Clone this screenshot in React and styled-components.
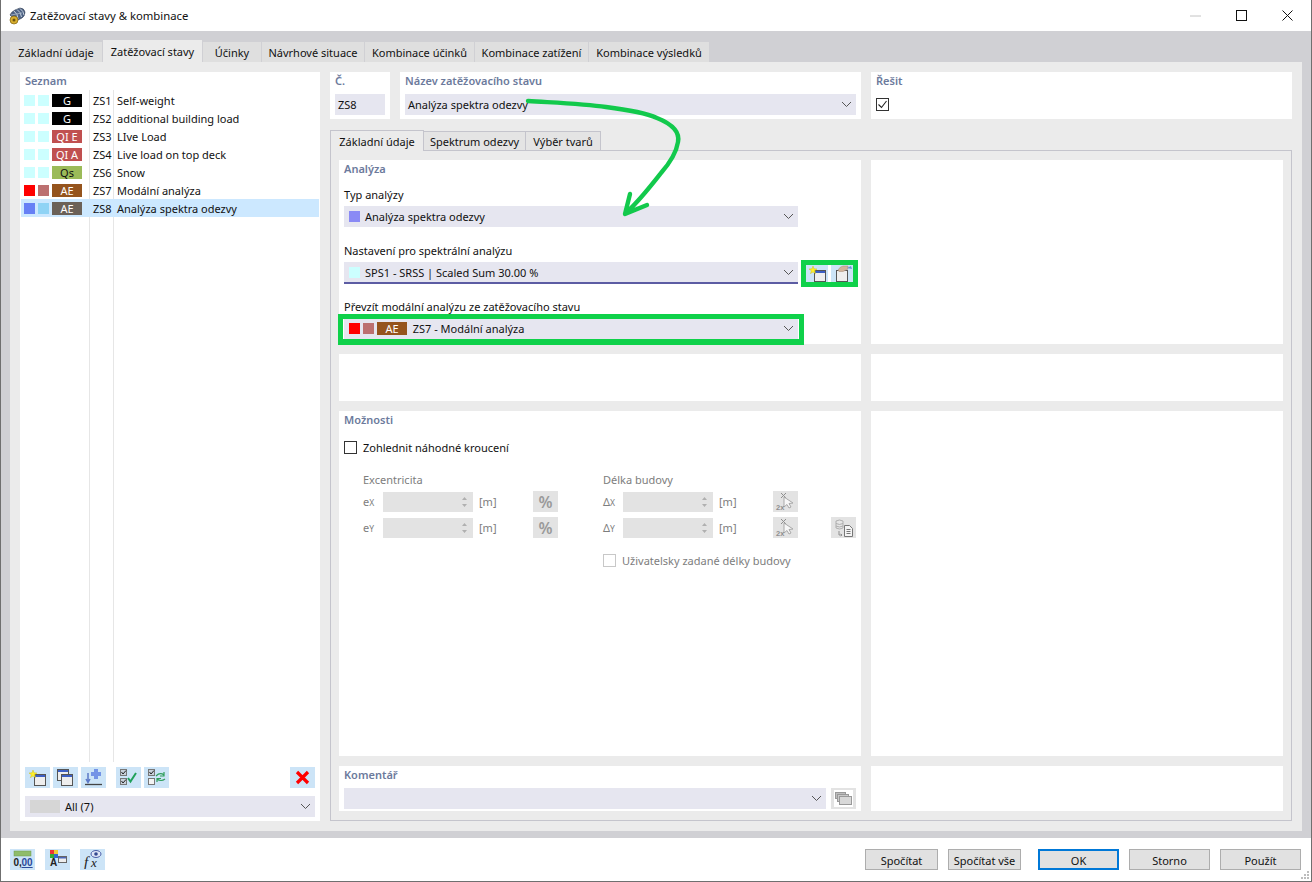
import React from 'react';
import styled, { createGlobalStyle } from 'styled-components';

const GlobalStyle = createGlobalStyle`
  html, body {
    margin: 0;
    padding: 0;
    background: #fff;
    overflow: hidden;
  }
  * {
    box-sizing: border-box;
  }
`;

const BAND = '#d0d0d4';
const PANEL = '#ebebeb';
const FIELD = '#e6e6f0';
const TITLE = '#6c7a9c';
const GREEN = '#0fd14a';

const Window = styled.div`
  position: relative;
  width: 1312px;
  height: 882px;
  display: flex;
  flex-direction: column;
  background: #fff;
  border-left: 1px solid #6f6f6f;
  border-right: 1px solid #6f6f6f;
  border-bottom: 1px solid #6f6f6f;
  font-family: 'Noto Sans', 'Open Sans', sans-serif;
  font-size: 11px;
  color: #111;
`;

const TitleBar = styled.div`
  height: 31px;
  flex: none;
  display: flex;
  align-items: center;
  padding: 0 1px 0 7px;
  gap: 4px;
  font-size: 11.3px;
`;

const WindowButtons = styled.div`
  margin-left: auto;
  display: flex;
  align-items: center;
  height: 100%;
`;

const WindowButton = styled.div`
  width: 46px;
  height: 100%;
  display: flex;
  align-items: center;
  justify-content: center;
`;

const TabStrip = styled.div`
  height: 31px;
  flex: none;
  display: flex;
  align-items: flex-end;
  gap: 1px;
  padding-left: 9px;
  background: ${BAND};
`;

const TopTab = styled.div`
  width: ${(p) => p.$w}px;
  height: ${(p) => (p.$active ? 22 : 20)}px;
  display: flex;
  align-items: center;
  justify-content: center;
  background: ${(p) => (p.$active ? PANEL : '#dfdfdf')};
`;

const Main = styled.div`
  flex: 1;
  min-height: 0;
  display: flex;
  background: ${BAND};
  padding: 0 9px 7px;
`;

const Body = styled.div`
  flex: 1;
  display: flex;
  gap: 10px;
  padding: 10px;
  background: ${PANEL};
`;

const ListPanel = styled.div`
  width: 300px;
  flex: none;
  display: flex;
  flex-direction: column;
  background: #fff;
  padding: 0 1px;
`;

const SectionTitle = styled.div`
  height: 18px;
  flex: none;
  display: flex;
  align-items: center;
  padding-left: ${(p) => p.$pad ?? 4}px;
  padding-bottom: 2px;
  font-weight: 600;
  color: ${TITLE};
`;

const ListArea = styled.div`
  flex: 1;
  display: flex;
  flex-direction: column;
  padding-top: 1px;
  background-image: linear-gradient(#e6e6e6, #e6e6e6), linear-gradient(#e6e6e6, #e6e6e6);
  background-size: 1px 672px, 1px 672px;
  background-position: 68px 0, 92px 0;
  background-repeat: no-repeat;
`;

const Row = styled.div`
  height: 18px;
  display: flex;
  align-items: center;
  padding-left: 3px;
  background: ${(p) => (p.$selected ? '#cce8ff' : 'transparent')};
`;

const Swatch = styled.span`
  width: ${(p) => p.$w || 11}px;
  height: ${(p) => p.$h || 11}px;
  flex: none;
  margin-right: ${(p) => p.$gap ?? 3}px;
  background: ${(p) => p.$c};
`;

const Tag = styled.span`
  width: 30px;
  height: 13px;
  flex: none;
  display: flex;
  align-items: center;
  justify-content: center;
  background: ${(p) => p.$c};
  color: ${(p) => p.$fg || '#fff'};
`;

const RowCode = styled.span`
  width: 24px;
  flex: none;
  margin-left: 11px;
`;

const ListTools = styled.div`
  display: flex;
  align-items: center;
  padding: 0 4px;
  height: 21px;
`;

const IconButton = styled.div`
  width: ${(p) => p.$w || 25}px;
  height: ${(p) => p.$h || 21}px;
  flex: none;
  margin-right: ${(p) => p.$mr ?? 3}px;
  margin-left: ${(p) => p.$ml || 0}px;
  display: flex;
  align-items: center;
  justify-content: center;
  overflow: hidden;
  background: ${(p) => (p.$off ? '#e3e3e3' : '#cce4f7')};
`;

const Combo = styled.div`
  height: ${(p) => p.$h || 21}px;
  width: ${(p) => (p.$w ? `${p.$w}px` : 'auto')};
  display: flex;
  align-items: center;
  flex: none;
  padding: 0 0 0 ${(p) => p.$pl ?? 5}px;
  background: ${FIELD};
  border-bottom: ${(p) => (p.$line ? '2px solid #5c5ca3' : 'none')};
`;

const Chevron = styled.svg`
  margin-left: auto;
  margin-right: 4px;
  flex: none;
`;

const Arrow = () => (
  <Chevron width="11" height="7" viewBox="0 0 11 7">
    <polyline points="1,1 5.5,5.5 10,1" fill="none" stroke="#555" strokeWidth="1" />
  </Chevron>
);

const FilterWrap = styled.div`
  margin: 8px 4px 4px;
`;

const RightColumn = styled.div`
  flex: 1;
  min-width: 0;
  display: flex;
  flex-direction: column;
`;

const HeadRow = styled.div`
  display: flex;
  gap: 10px;
  height: 47px;
  flex: none;
`;

const HeadCard = styled.div`
  width: ${(p) => (p.$w ? `${p.$w}px` : 'auto')};
  flex: ${(p) => (p.$w ? 'none' : 1)};
  background: #fff;
  padding: 0 5px;
  display: flex;
  flex-direction: column;
`;

const HeadValue = styled.div`
  margin-top: ${(p) => p.$mt || 4}px;
`;

const InnerTabs = styled.div`
  height: 21px;
  margin-top: 11px;
  flex: none;
  display: flex;
  align-items: flex-end;
  border-bottom: 1px solid #c4c4cc;
`;

const InnerTab = styled.div`
  width: ${(p) => p.$w}px;
  height: ${(p) => (p.$active ? 21 : 19)}px;
  margin-bottom: ${(p) => (p.$active ? -1 : 0)}px;
  display: flex;
  align-items: center;
  justify-content: center;
  background: ${(p) => (p.$active ? PANEL : '#e4e4e4')};
  border: 1px solid #c4c4cc;
  border-bottom: none;
  border-left: ${(p) => (p.$active ? '1px solid #c4c4cc' : 'none')};
`;

const TabPanel = styled.div`
  flex: 1;
  min-height: 0;
  display: grid;
  grid-template-columns: 522px 412px;
  grid-template-rows: 184px 47px 345px 45px;
  gap: 10px;
  padding: 9px 8px;
  border: 1px solid #c4c4cc;
  border-top: none;
`;

const Card = styled.div`
  background: #fff;
  padding: 0 5px;
  display: flex;
  flex-direction: column;
`;

const FieldLabel = styled.div`
  height: 16px;
  margin-top: ${(p) => p.$mt || 0}px;
  margin-bottom: 3px;
  padding-bottom: 2px;
  display: flex;
  align-items: center;
`;

const Framed = styled.div`
  position: relative;
  width: ${(p) => p.$w}px;
  &::after {
    content: '';
    position: absolute;
    inset: -4px -6px -6px -6px;
    border: 5px solid ${GREEN};
    border-bottom-width: 6px;
    pointer-events: none;
  }
`;

const FieldRow = styled.div`
  display: flex;
  align-items: flex-start;
`;

const FrameTools = styled.div`
  display: flex;
  gap: 3px;
  width: 57px;
  height: 27px;
  margin: -2px 0 -3px 3px;
  border: 5px solid ${GREEN};
  background: #fff;
`;

const CheckLine = styled.label`
  display: flex;
  align-items: center;
  gap: 6px;
  margin-top: ${(p) => p.$mt}px;
  color: ${(p) => (p.$off ? '#7d7d7d' : 'inherit')};
`;

const Box = styled.span`
  width: 13px;
  height: 13px;
  flex: none;
  display: flex;
  align-items: center;
  justify-content: center;
  border: 1px solid ${(p) => (p.$off ? '#c8c8c8' : '#333')};
  background: #fff;
`;

const OptionsGrid = styled.div`
  display: grid;
  grid-template-columns: 240px 1fr;
  margin-top: 17px;
  padding-left: 19px;
  color: #7d7d7d;
`;

const OptionGroup = styled.div`
  display: flex;
  flex-direction: column;
  gap: 5px;
`;

const GroupLabel = styled.div`
  height: 16px;
  margin-bottom: -2px;
`;

const Measure = styled.div`
  display: flex;
  align-items: center;
  height: 21px;
`;

const SymbolLabel = styled.span`
  width: 20px;
  flex: none;
`;

const Sub = styled.span`
  font-size: 8.5px;
`;

const Spin = styled.div`
  width: 90px;
  height: 20px;
  flex: none;
  display: flex;
  align-items: center;
  justify-content: flex-end;
  padding-right: 5px;
  background: #e3e3e3;
`;

const Unit = styled.span`
  width: 60px;
  flex: none;
  padding-left: 6px;
`;

const Percent = styled.span`
  font-size: 16px;
  font-weight: 600;
  color: #9a9a9a;
`;

const CommentRow = styled.div`
  display: flex;
  align-items: center;
  gap: 5px;
  margin-top: 4px;
`;

const Footer = styled.div`
  height: 43px;
  flex: none;
  display: flex;
  align-items: center;
  padding: 0 10px 1px 9px;
`;

const FooterIcons = styled.div`
  display: flex;
  gap: 10px;
`;

const FooterButtons = styled.div`
  margin-left: auto;
  display: flex;
  align-items: center;
`;

const DialogButton = styled.div`
  width: ${(p) => p.$w}px;
  height: 21px;
  margin-left: ${(p) => p.$ml ?? 10}px;
  padding-top: 2px;
  display: flex;
  align-items: center;
  justify-content: center;
  background: #e1e1e1;
  border: ${(p) => (p.$primary ? '2px solid #0078d7' : '1px solid #adadad')};
`;

const Overlay = styled.svg`
  position: absolute;
  left: -1px;
  top: 0;
  pointer-events: none;
`;

const Grip = styled.svg`
  position: absolute;
  right: 1px;
  bottom: 1px;
`;

const AppGlyph = () => (
  <svg width="18" height="18" viewBox="0 0 18 18">
    <path d="M2 8 Q3 5 7 3 L12 1 Q16 1 17 5 Q17 9 14 11 L8 14 Z" fill="#4f6486" stroke="#2f3a4f" strokeWidth="0.6" />
    <path d="M6 4 Q10 7 10 12 M9 2.500 Q13 5 13.500 10 M12 1.500 Q15.500 4 16 8" fill="none" stroke="#c5d0dd" strokeWidth="1" />
    <path d="M3 8 L14 6" stroke="#aab7c8" strokeWidth="0.8" />
    <circle cx="6" cy="13" r="4" fill="#d7ae2e" stroke="#7f6210" strokeWidth="0.7" />
    <circle cx="6" cy="13" r="1.500" fill="#6d5410" />
  </svg>
);

const Star = ({ x = 2, y = 1 }) => (
  <path
    transform={`translate(${x} ${y})`}
    d="M4 0 L5 2.800 L8 3 L5.600 4.800 L6.600 7.600 L4 6 L1.400 7.600 L2.400 4.800 L0 3 L3 2.800 Z"
    fill="#fff02a"
    stroke="#c8b400"
    strokeWidth="0.4"
  />
);

const Pane = ({ x, y, w = 11, h = 11, tone = '#3d5fc4', line = '#555' }) => (
  <g>
    <rect x={x + 0.5} y={y + 0.5} width={w} height={h} fill="#eeeeee" stroke={line} />
    <rect x={x + 1} y={y + 1} width={w - 1} height={2} fill={tone} />
  </g>
);

const NewIcon = () => (
  <svg width="21" height="17" viewBox="0 0 21 17">
    <Pane x={7} y={5} />
    <Star x={2} y={1} />
  </svg>
);

const TakeIcon = () => (
  <svg width="21" height="17" viewBox="0 0 21 17">
    <Pane x={4} y={5} tone="#eeeeee" />
    <path d="M6 5 Q8 1.500 11 1 L16 1 L16 4 L11 6.500 L7 6.500 Z" fill="#d2b49c" stroke="#a58a74" strokeWidth="0.5" />
    <path d="M15 3 L19 1 L20 4 Z" fill="#6c8fd6" />
  </svg>
);

const CopyIcon = () => (
  <svg width="21" height="17" viewBox="0 0 21 17">
    <Pane x={2} y={0} />
    <Pane x={6} y={5} />
  </svg>
);

const ImportIcon = () => (
  <svg width="21" height="17" viewBox="0 0 21 17">
    <path d="M11 0 H15 V3 H18 V7 H15 V10 H11 V7 H8 V3 H11 Z" fill="#7393e6" />
    <path d="M5 4 V13 M3 10 L5 13.500 L7 10" fill="none" stroke="#5b78c8" strokeWidth="1.5" />
    <path d="M2 15.500 H19" stroke="#444" strokeWidth="1.300" />
  </svg>
);

const MiniCheck = ({ y, on = true }) => (
  <g>
    <rect x="2.500" y={y + 0.5} width="6" height="6" fill={on ? '#c8d0da' : '#f4f4f4'} stroke="#777" />
    {on && <path d={`M3.500 ${y + 3} L5 ${y + 5} L8 ${y + 1.5}`} fill="none" stroke="#222" />}
  </g>
);

const CheckAllIcon = () => (
  <svg width="21" height="17" viewBox="0 0 21 17">
    <MiniCheck y={0} />
    <MiniCheck y={9} />
    <path d="M10 9 L12.500 12.500 L18 4" fill="none" stroke="#1fa05a" strokeWidth="2" />
  </svg>
);

const SwapIcon = () => (
  <svg width="21" height="17" viewBox="0 0 21 17">
    <MiniCheck y={0} />
    <MiniCheck y={9} on={false} />
    <path d="M10 7 Q14 3 18 6 M18 3 V7 H14" fill="none" stroke="#2e9e5b" strokeWidth="1.200" />
    <path d="M19 10 Q15 13 11 10 M11 13 V9.500 H15" fill="none" stroke="#2e9e5b" strokeWidth="1.200" />
  </svg>
);

const DeleteIcon = () => (
  <svg width="15" height="15" viewBox="0 0 15 15">
    <path d="M2 2 L13 13 M13 2 L2 13" stroke="#f00" strokeWidth="3.200" />
  </svg>
);

const UnitsIcon = () => (
  <svg width="21" height="18" viewBox="0 0 21 18">
    <rect x="2" y="1" width="17" height="5" fill="#8fbc6a" stroke="#6f9a4c" strokeWidth="0.5" />
    <text x="1.500" y="16" fontFamily="Liberation Sans" fontSize="10" fontWeight="700" fill="#222">0,</text>
    <text x="9.500" y="16" fontFamily="Liberation Sans" fontSize="10" fontWeight="700" fill="#2a4a9c" textDecoration="underline">00</text>
  </svg>
);

const StyleIcon = () => (
  <svg width="21" height="18" viewBox="0 0 21 18">
    <rect x="3" y="0" width="4" height="4" fill="#e33" />
    <rect x="7" y="0" width="4" height="4" fill="#ec3" />
    <rect x="3" y="4" width="4" height="4" fill="#3a3" />
    <rect x="7" y="4" width="4" height="4" fill="#36c" />
    <text x="3" y="16" fontFamily="Liberation Sans" fontSize="10" fontWeight="700" fill="#222">A</text>
    <rect x="11.500" y="6.500" width="8" height="6" fill="#eee" stroke="#666" />
    <rect x="12" y="7" width="7" height="1.500" fill="#4a66b8" />
  </svg>
);

const FormulaIcon = () => (
  <svg width="21" height="20" viewBox="0 0 21 20">
    <text x="2" y="18" fontFamily="Liberation Serif" fontSize="15" fontStyle="italic" fill="#222">f</text>
    <text x="9" y="18" fontFamily="Liberation Serif" fontSize="13" fontStyle="italic" fill="#222">x</text>
    <ellipse cx="14" cy="5" rx="5" ry="3.500" fill="#dfe6f7" stroke="#4a5ea8" />
    <circle cx="14" cy="5" r="1.800" fill="#34488f" />
  </svg>
);

const PickIcon = () => (
  <svg width="21" height="20" viewBox="0 0 21 20">
    <path d="M6 1 L11 6 M11 1 L6 6" stroke="#8f8f8f" />
    <path d="M9 5 L9 15 L12 12.500 L14 16 L16 15 L14 11.500 L18 11 Z" fill="#f7f7f7" stroke="#a9a9a9" />
    <text x="1" y="18" fontFamily="Liberation Sans" fontSize="7.500" fontWeight="700" fill="#8f8f8f">2x</text>
  </svg>
);

const StackIcon = () => (
  <svg width="21" height="20" viewBox="0 0 21 20">
    <path d="M3 3 Q6.500 1 10 3 V10 Q6.500 12 3 10 Z M3 5.500 Q6.500 7.500 10 5.500 M3 8 Q6.500 10 10 8" fill="#e6e6e6" stroke="#a8a8a8" strokeWidth="0.9" />
    <path d="M6 13 V17 H9 M7.800 15.800 L9 17 L7.800 18.200" fill="none" stroke="#8f8f8f" />
    <path d="M11.500 7.500 H16.500 L19.500 10.500 V18.500 H11.500 Z M13.500 11.500 H17.500 M13.500 13.500 H17.500 M13.500 15.500 H17.500" fill="#f4f4f4" stroke="#777" />
  </svg>
);

const WindowsIcon = () => (
  <svg width="19" height="17" viewBox="0 0 19 17">
    <rect width="19" height="17" fill="#fff" />
    <rect x="1.500" y="2.500" width="10" height="6" fill="#bdbdbd" stroke="#999" />
    <rect x="3.500" y="4.500" width="11" height="7" fill="#c9c9c9" stroke="#999" />
    <rect x="5.500" y="6.500" width="12" height="8" fill="#d8d8d8" stroke="#999" />
  </svg>
);

const Spinner = () => (
  <svg width="7" height="14" viewBox="0 0 7 14">
    <path d="M1 5 L3.500 2 L6 5 Z M1 9 L3.500 12 L6 9 Z" fill="#b0b0b0" />
  </svg>
);

const Tick = () => (
  <svg width="11" height="11" viewBox="0 0 11 11">
    <polyline points="1.500,5.500 4.500,8.500 9.500,2" fill="none" stroke="#222" strokeWidth="1.100" />
  </svg>
);

const CYAN = '#ccffff';

const rows = [
  { code: 'ZS1', name: 'Self-weight', a: CYAN, b: CYAN, tag: 'G', c: '#000' },
  { code: 'ZS2', name: 'additional building load', a: CYAN, b: CYAN, tag: 'G', c: '#000' },
  { code: 'ZS3', name: 'LIve Load', a: CYAN, b: CYAN, tag: 'QI E', c: '#c05050' },
  { code: 'ZS4', name: 'Live load on top deck', a: CYAN, b: CYAN, tag: 'QI A', c: '#c05050' },
  { code: 'ZS6', name: 'Snow', a: CYAN, b: CYAN, tag: 'Qs', c: '#9bbb59', fg: '#111' },
  { code: 'ZS7', name: 'Modální analýza', a: '#ff0000', b: '#bc7070', tag: 'AE', c: '#95541d' },
  { code: 'ZS8', name: 'Analýza spektra odezvy', a: '#6680f5', b: '#8fd3f5', tag: 'AE', c: '#6b6158', selected: true },
];

const topTabs = [
  ['Základní údaje', 92],
  ['Zatěžovací stavy', 99, true],
  ['Účinky', 58],
  ['Návrhové situace', 102],
  ['Kombinace účinků', 109],
  ['Kombinace zatížení', 113],
  ['Kombinace výsledků', 120],
];

const measureRows = (labels, last) =>
  labels.map(([symbol, sub, icon], i) => (
    <Measure key={sub}>
      <SymbolLabel>
        {symbol}
        <Sub>{sub}</Sub>
      </SymbolLabel>
      <Spin>
        <Spinner />
      </Spin>
      <Unit>[m]</Unit>
      <IconButton $off $mr={last && i === 1 ? 33 : 3}>
        {icon}
      </IconButton>
      {last && i === 1 && (
        <IconButton $off $mr={0}>
          <StackIcon />
        </IconButton>
      )}
    </Measure>
  ));

const App = () => {
  return (
    <>
      <GlobalStyle />
      <Window>
        <TitleBar>
          <AppGlyph />
          Zatěžovací stavy &amp; kombinace
          <WindowButtons>
            <WindowButton>
              <svg width="11" height="2" viewBox="0 0 11 2">
                <path d="M0 1 H11" stroke="#c4c4c4" />
              </svg>
            </WindowButton>
            <WindowButton>
              <svg width="11" height="11" viewBox="0 0 11 11">
                <rect x="0.500" y="0.500" width="10" height="10" fill="none" stroke="#111" />
              </svg>
            </WindowButton>
            <WindowButton>
              <svg width="11" height="11" viewBox="0 0 11 11">
                <path d="M0.500 0.500 L10.500 10.500 M10.500 0.500 L0.500 10.500" stroke="#111" />
              </svg>
            </WindowButton>
          </WindowButtons>
        </TitleBar>

        <TabStrip>
          {topTabs.map(([label, w, active]) => (
            <TopTab key={label} $w={w} $active={active}>
              {label}
            </TopTab>
          ))}
        </TabStrip>

        <Main>
          <Body>
            <ListPanel>
              <SectionTitle>Seznam</SectionTitle>
              <ListArea>
                {rows.map((r) => (
                  <Row key={r.code} $selected={r.selected}>
                    <Swatch $c={r.a} />
                    <Swatch $c={r.b} />
                    <Tag $c={r.c} $fg={r.fg}>
                      {r.tag}
                    </Tag>
                    <RowCode>{r.code}</RowCode>
                    {r.name}
                  </Row>
                ))}
              </ListArea>
              <ListTools>
                <IconButton><NewIcon /></IconButton>
                <IconButton><CopyIcon /></IconButton>
                <IconButton><ImportIcon /></IconButton>
                <IconButton $ml={7}><CheckAllIcon /></IconButton>
                <IconButton><SwapIcon /></IconButton>
                <IconButton $ml={118} $mr={0}><DeleteIcon /></IconButton>
              </ListTools>
              <FilterWrap>
                <Combo>
                  <Swatch $c="#d6d6d6" $w={30} $h={13} $gap={5} />
                  All (7)
                  <Arrow />
                </Combo>
              </FilterWrap>
            </ListPanel>

            <RightColumn>
              <HeadRow>
                <HeadCard $w={60}>
                  <SectionTitle $pad={0}>Č.</SectionTitle>
                  <HeadValue>
                    <Combo $pl={3}>ZS8</Combo>
                  </HeadValue>
                </HeadCard>
                <HeadCard $w={461}>
                  <SectionTitle $pad={0}>Název zatěžovacího stavu</SectionTitle>
                  <HeadValue>
                    <Combo $pl={3}>
                      Analýza spektra odezvy
                      <Arrow />
                    </Combo>
                  </HeadValue>
                </HeadCard>
                <HeadCard>
                  <SectionTitle $pad={0}>Řešit</SectionTitle>
                  <HeadValue $mt={8}>
                    <Box>
                      <Tick />
                    </Box>
                  </HeadValue>
                </HeadCard>
              </HeadRow>

              <InnerTabs>
                <InnerTab $w={94} $active>Základní údaje</InnerTab>
                <InnerTab $w={102}>Spektrum odezvy</InnerTab>
                <InnerTab $w={75}>Výběr tvarů</InnerTab>
              </InnerTabs>

              <TabPanel>
                <Card>
                  <SectionTitle $pad={0}>Analýza</SectionTitle>
                  <FieldLabel $mt={9}>Typ analýzy</FieldLabel>
                  <Combo $w={454}>
                    <Swatch $c="#8a8af5" $gap={5} />
                    Analýza spektra odezvy
                    <Arrow />
                  </Combo>
                  <FieldLabel $mt={16}>Nastavení pro spektrální analýzu</FieldLabel>
                  <FieldRow>
                    <Combo $w={454} $h={22} $line>
                      <Swatch $c={CYAN} $gap={5} />
                      SPS1 - SRSS | Scaled Sum 30.00 %
                      <Arrow />
                    </Combo>
                    <FrameTools>
                      <IconButton $w={22} $h={17} $mr={0}><NewIcon /></IconButton>
                      <IconButton $w={22} $h={17} $mr={0}><TakeIcon /></IconButton>
                    </FrameTools>
                  </FieldRow>
                  <FieldLabel $mt={15}>Převzít modální analýzu ze zatěžovacího stavu</FieldLabel>
                  <Framed $w={454}>
                    <Combo $w={454}>
                      <Swatch $c="#ff0000" />
                      <Swatch $c="#bc7070" />
                      <Tag $c="#95541d">AE</Tag>
                      &nbsp;&nbsp;ZS7 - Modální analýza
                      <Arrow />
                    </Combo>
                  </Framed>
                </Card>
                <Card />
                <Card />
                <Card />

                <Card>
                  <SectionTitle $pad={0}>Možnosti</SectionTitle>
                  <CheckLine $mt={11}>
                    <Box />
                    Zohlednit náhodné kroucení
                  </CheckLine>
                  <OptionsGrid>
                    <OptionGroup>
                      <GroupLabel>Excentricita</GroupLabel>
                      {measureRows([
                        ['e', 'X', <Percent key="x">%</Percent>],
                        ['e', 'Y', <Percent key="y">%</Percent>],
                      ])}
                    </OptionGroup>
                    <OptionGroup>
                      <GroupLabel>Délka budovy</GroupLabel>
                      {measureRows(
                        [
                          ['Δ', 'X', <PickIcon key="x" />],
                          ['Δ', 'Y', <PickIcon key="y" />],
                        ],
                        true
                      )}
                      <CheckLine $off $mt={10}>
                        <Box $off />
                        Uživatelsky zadané délky budovy
                      </CheckLine>
                    </OptionGroup>
                  </OptionsGrid>
                </Card>
                <Card />

                <Card>
                  <SectionTitle $pad={0}>Komentář</SectionTitle>
                  <CommentRow>
                    <Combo $w={482}>
                      <Arrow />
                    </Combo>
                    <IconButton $off $mr={0}><WindowsIcon /></IconButton>
                  </CommentRow>
                </Card>
                <Card />
              </TabPanel>
            </RightColumn>
          </Body>
        </Main>

        <Footer>
          <FooterIcons>
            <IconButton $mr={0}><UnitsIcon /></IconButton>
            <IconButton $mr={0}><StyleIcon /></IconButton>
            <IconButton $mr={0}><FormulaIcon /></IconButton>
          </FooterIcons>
          <FooterButtons>
            <DialogButton $w={73}>Spočítat</DialogButton>
            <DialogButton $w={73}>Spočítat vše</DialogButton>
            <DialogButton $w={81} $ml={17} $primary>OK</DialogButton>
            <DialogButton $w={81}>Storno</DialogButton>
            <DialogButton $w={81}>Použít</DialogButton>
          </FooterButtons>
        </Footer>

        <Overlay width="1312" height="882" viewBox="0 0 1312 882">
          <path
            d="M528 101 C560 103 585 104 606 107 C630 110 648 114 657 118 C672 124 680 132 678 142 C676 155 668 165 661 173 C650 187 640 200 626 213 M630 194 L625 214 L647 205"
            fill="none"
            stroke="#12c94c"
            strokeWidth="4.400"
            strokeLinecap="round"
            strokeLinejoin="round"
          />
        </Overlay>
        <Grip width="10" height="10" viewBox="0 0 10 10">
          <path d="M7 1 h2 v2 h-2z M4 4 h2 v2 h-2z M7 4 h2 v2 h-2z M1 7 h2 v2 h-2z M4 7 h2 v2 h-2z M7 7 h2 v2 h-2z" fill="#bdbdbd" />
        </Grip>
      </Window>
    </>
  );
};

export default App;
